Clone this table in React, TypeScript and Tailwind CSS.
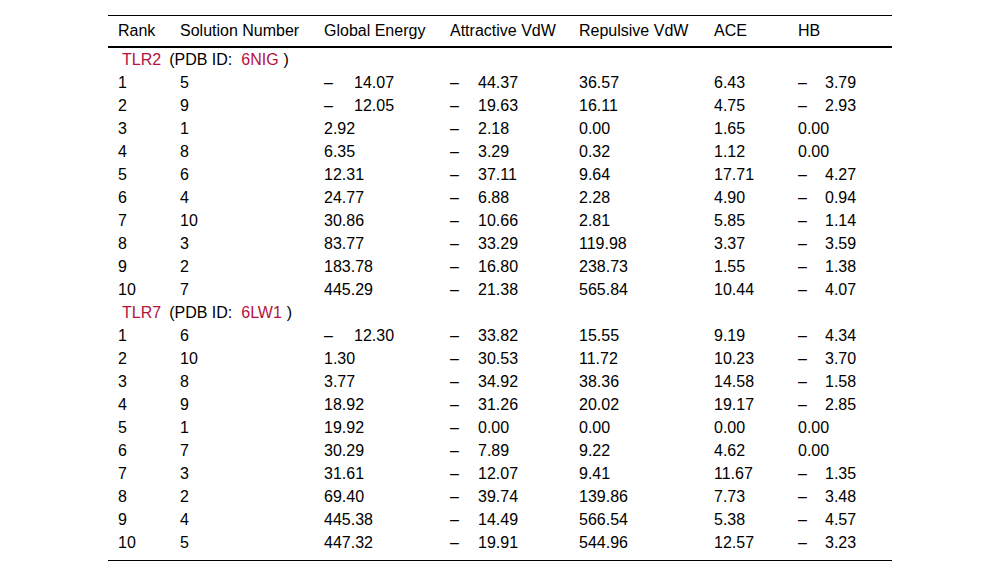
const cols = "grid grid-cols-[62px_144px_126px_129px_135px_84px_104px]";

type Row = [string, string, string, string, string, string, string];

const tlr2: Row[] = [
  ["1", "5", "-14.07", "-44.37", "36.57", "6.43", "-3.79"],
  ["2", "9", "-12.05", "-19.63", "16.11", "4.75", "-2.93"],
  ["3", "1", "2.92", "-2.18", "0.00", "1.65", "0.00"],
  ["4", "8", "6.35", "-3.29", "0.32", "1.12", "0.00"],
  ["5", "6", "12.31", "-37.11", "9.64", "17.71", "-4.27"],
  ["6", "4", "24.77", "-6.88", "2.28", "4.90", "-0.94"],
  ["7", "10", "30.86", "-10.66", "2.81", "5.85", "-1.14"],
  ["8", "3", "83.77", "-33.29", "119.98", "3.37", "-3.59"],
  ["9", "2", "183.78", "-16.80", "238.73", "1.55", "-1.38"],
  ["10", "7", "445.29", "-21.38", "565.84", "10.44", "-4.07"],
];

const tlr7: Row[] = [
  ["1", "6", "-12.30", "-33.82", "15.55", "9.19", "-4.34"],
  ["2", "10", "1.30", "-30.53", "11.72", "10.23", "-3.70"],
  ["3", "8", "3.77", "-34.92", "38.36", "14.58", "-1.58"],
  ["4", "9", "18.92", "-31.26", "20.02", "19.17", "-2.85"],
  ["5", "1", "19.92", "-0.00", "0.00", "0.00", "0.00"],
  ["6", "7", "30.29", "-7.89", "9.22", "4.62", "0.00"],
  ["7", "3", "31.61", "-12.07", "9.41", "11.67", "-1.35"],
  ["8", "2", "69.40", "-39.74", "139.86", "7.73", "-3.48"],
  ["9", "4", "445.38", "-14.49", "566.54", "5.38", "-4.57"],
  ["10", "5", "447.32", "-19.91", "544.96", "12.57", "-3.23"],
];

// width of the dash + gap before the number, per column
const dashW: Record<number, string> = {
  2: "w-[30px]",
  3: "w-[28px]",
  6: "w-[27px]",
};

function Num({ v, col }: { v: string; col: number }) {
  if (!v.startsWith("-")) return <span>{v}</span>;
  return (
    <span className="whitespace-nowrap">
      <span className={`inline-block ${dashW[col] ?? "w-[28px]"}`}>–</span>
      {v.slice(1)}
    </span>
  );
}

function Group({ name, pdb }: { name: string; pdb: string }) {
  return (
    <div className="flex h-[23px] items-center pl-[14px]">
      <span className="text-[#b3123e]">{name}</span>
      <span className="ml-[8px]">(PDB ID:</span>
      <span className="ml-[9px] text-[#b3123e]">{pdb}</span>
      <span className="ml-[5px]">)</span>
    </div>
  );
}

export default function App() {
  const headers = [
    "Rank",
    "Solution Number",
    "Global Energy",
    "Attractive VdW",
    "Repulsive VdW",
    "ACE",
    "HB",
  ];

  const renderRows = (rows: Row[]) =>
    rows.map((r, i) => (
      <div key={i} className={`${cols} h-[23px] items-center`}>
        {r.map((v, c) => (
          <div key={c} className="pl-[10px]">
            <Num v={v} col={c} />
          </div>
        ))}
      </div>
    ));

  return (
    <div className="min-h-[576px] w-full bg-white pt-[15px] font-['Liberation_Sans',Arial,sans-serif] text-[16px] leading-none text-black">
      <div className="mx-auto w-[784px] border-t border-b border-black pb-[6px]">
        {/* Header */}
        <div className={`${cols} h-[32px] items-center border-b-2 border-black`}>
          {headers.map((h) => (
            <div key={h} className="pl-[10px]">
              {h}
            </div>
          ))}
        </div>

        <Group name="TLR2" pdb="6NIG" />
        {renderRows(tlr2)}

        <Group name="TLR7" pdb="6LW1" />
        {renderRows(tlr7)}
      </div>
    </div>
  );
}
